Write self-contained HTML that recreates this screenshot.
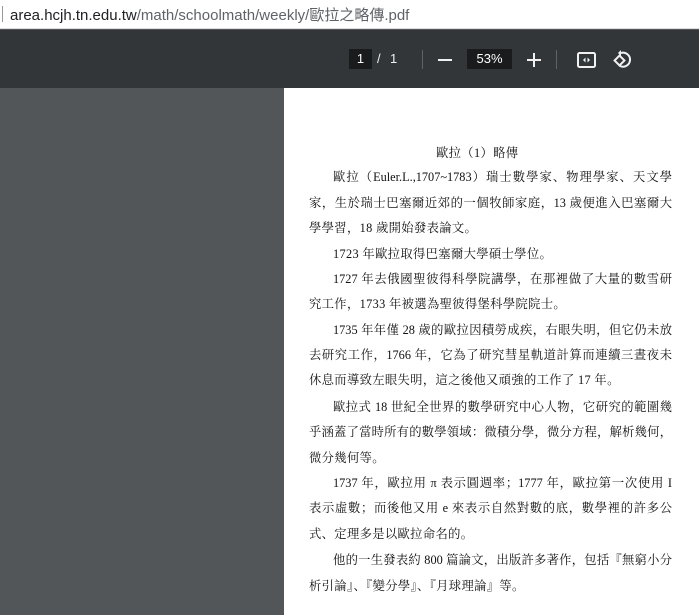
<!DOCTYPE html>
<html><head><meta charset="utf-8"><style>
*{margin:0;padding:0;box-sizing:border-box}
body{width:699px;height:615px;overflow:hidden;position:relative;background:#525659;font-family:"Liberation Sans",sans-serif}
#addr{position:absolute;left:0;top:0;width:699px;height:29px;background:#fff;border-bottom:1px solid #dadce0}
#addr span{position:absolute;left:10px;top:4px;font-size:15px;color:#202124;font-family:"Liberation Sans","Noto Sans CJK TC",sans-serif}
#addr .g{color:#5f6368}
#addr i{position:absolute;left:2px;top:6px;width:1px;height:16px;background:#999}
#tb{position:absolute;left:0;top:30px;width:699px;height:58px;background:#323639;color:#f1f1f1}
.box{position:absolute;background:#191b1c;color:#fff;font-size:13px;text-align:center;line-height:20px}
.t{position:absolute;font-size:13px;color:#f1f1f1}
.sep{position:absolute;top:20px;width:1px;height:19px;background:#5f6368}
#page{position:absolute;left:284px;top:88px;width:415px;height:527px;background:#fff}
.l{position:absolute;left:309px;width:363px;font-family:"Liberation Serif","Noto Serif CJK SC",serif;font-size:12.3px;color:#111;white-space:nowrap;line-height:16px;letter-spacing:0.35px}
.j{text-align:justify;text-align-last:justify;letter-spacing:0}
.i{left:333px;width:339px}
</style></head><body>
<div id="addr"><i></i><span>area.hcjh.tn.edu.tw<span class="g" style="position:static">/math/schoolmath/weekly/歐拉之略傳.pdf</span></span></div>
<div id="tb">
<div class="box" style="left:349px;top:19px;width:23px">1</div>
<div class="t" style="left:377px;top:21px">/</div>
<div class="t" style="left:390px;top:21px">1</div>
<div class="sep" style="left:422px"></div>
<div style="position:absolute;left:438px;top:29px;width:14px;height:2px;background:#f1f1f1"></div>
<div class="box" style="left:467px;top:19px;width:45px">53%</div>
<div style="position:absolute;left:527px;top:29px;width:14px;height:2px;background:#f1f1f1"></div>
<div style="position:absolute;left:533px;top:23px;width:2px;height:14px;background:#f1f1f1"></div>
<div class="sep" style="left:556px"></div>
<svg style="position:absolute;left:576px;top:20px" width="22" height="20" viewBox="0 0 22 20"><rect x="2" y="3" width="17" height="14" rx="1.5" fill="none" stroke="#f1f1f1" stroke-width="2"/><path d="M7 10l2.5-2.5v5zM14 10l-2.5-2.5v5z" fill="#f1f1f1"/></svg>
<svg style="position:absolute;left:611px;top:19px" width="22" height="22" viewBox="0 0 22 22"><path d="M10 4a7 7 0 1 1 -1 13" fill="none" stroke="#f1f1f1" stroke-width="2"/><path d="M10 1v6l-3-3z" fill="#f1f1f1"/><rect x="5" y="8" width="7" height="7" transform="rotate(45 8.5 11.5)" fill="none" stroke="#f1f1f1" stroke-width="2"/></svg>
</div>
<div id="page"></div>
<div class="l" style="top:145px;left:436px;width:auto">歐拉（1）略傳</div>
<div class="l j i" style="top:169px">歐拉（Euler.L.,1707~1783）瑞士數學家、物理學家、天文學</div>
<div class="l j" style="top:195px">家，生於瑞士巴塞爾近郊的一個牧師家庭，13 歲便進入巴塞爾大</div>
<div class="l" style="top:220px">學學習，18 歲開始發表論文。</div>
<div class="l i" style="top:246px">1723 年歐拉取得巴塞爾大學碩士學位。</div>
<div class="l j i" style="top:271px">1727 年去俄國聖彼得科學院講學，在那裡做了大量的數雪研</div>
<div class="l" style="top:296px">究工作，1733 年被選為聖彼得堡科學院院士。</div>
<div class="l j i" style="top:322px">1735 年年僅 28 歲的歐拉因積勞成疾，右眼失明，但它仍未放</div>
<div class="l j" style="top:347px">去研究工作，1766 年，它為了研究彗星軌道計算而連續三晝夜未</div>
<div class="l" style="top:372px">休息而導致左眼失明，這之後他又頑強的工作了 17 年。</div>
<div class="l j i" style="top:399px">歐拉式 18 世紀全世界的數學研究中心人物，它研究的範圍幾</div>
<div class="l j" style="top:424px">乎涵蓋了當時所有的數學領域：微積分學，微分方程，解析幾何，</div>
<div class="l" style="top:450px">微分幾何等。</div>
<div class="l j i" style="top:475px">1737 年，歐拉用 π 表示圓週率；1777 年，歐拉第一次使用 I</div>
<div class="l j" style="top:500px">表示虛數；而後他又用 e 來表示自然對數的底，數學裡的許多公</div>
<div class="l" style="top:526px">式、定理多是以歐拉命名的。</div>
<div class="l j i" style="top:552px">他的一生發表約 800 篇論文，出版許多著作，包括『無窮小分</div>
<div class="l" style="top:578px">析引論』、『變分學』、『月球理論』等。</div>
</body></html>
